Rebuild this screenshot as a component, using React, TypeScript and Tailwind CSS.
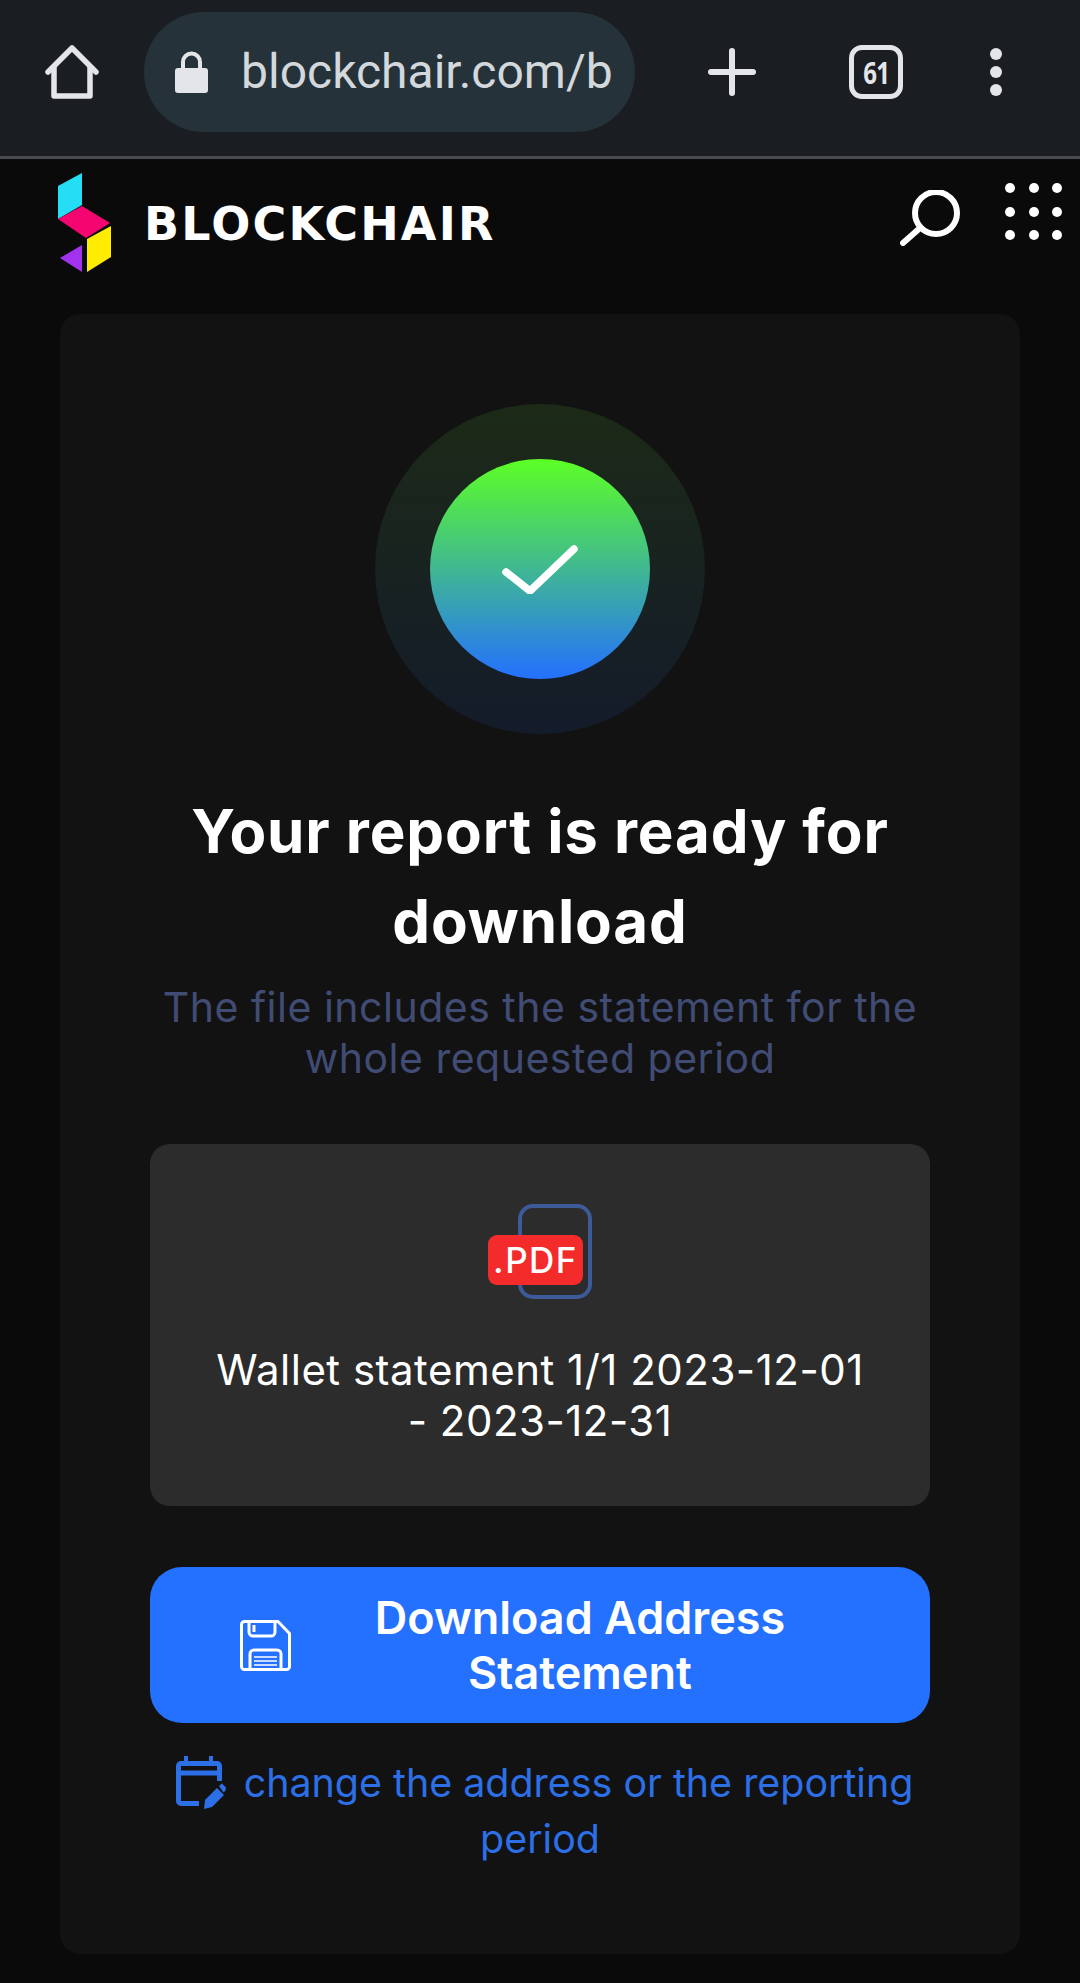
const BrowserBar = () => (
  <div className="flex h-[159px] items-center border-b-[3px] border-[#474a4e] bg-[#1a1d21] pb-[12px] pl-[45px]">
    <svg width="54" height="54" viewBox="0 0 54 54" fill="none" stroke="#e3e5e8" strokeWidth="5.5" strokeLinejoin="round" strokeLinecap="round">
      <path d="M3 27 27 3l24 24" />
      <path d="M9 23v28h36V23" />
    </svg>
    <div className="ml-[45px] flex h-[120px] w-[491px] items-center overflow-hidden rounded-full bg-[#263239] pl-[31px]">
      <svg width="33" height="42" viewBox="0 0 33 42" className="shrink-0">
        <path d="M8 19v-8a8.5 8.5 0 0 1 17 0v8" fill="none" stroke="#e3e5e8" strokeWidth="4" />
        <rect x="0" y="17" width="33" height="25" rx="3" fill="#e3e5e8" />
      </svg>
      <span className="ml-[33px] whitespace-nowrap font-['Roboto',sans-serif] text-[48px] leading-none text-[#d3d8dc]">blockchair.com/b</span>
    </div>
    <svg width="48" height="48" viewBox="0 0 48 48" className="ml-[73px]" stroke="#e3e5e8" strokeWidth="6" strokeLinecap="round">
      <path d="M3 24h42M24 3v42" />
    </svg>
    <div className="ml-[93px] flex h-[54px] w-[54px] items-center justify-center rounded-[13px] border-[5px] border-[#e3e5e8] font-['Open_Sans',sans-serif] text-[30px] font-bold text-[#e3e5e8]">
      <span className="scale-x-[0.8] tracking-[-1px]">61</span>
    </div>
    <div className="ml-[87px] flex flex-col gap-[6px]">
      <div className="h-[12px] w-[12px] rounded-full bg-[#e3e5e8]" />
      <div className="h-[12px] w-[12px] rounded-full bg-[#e3e5e8]" />
      <div className="h-[12px] w-[12px] rounded-full bg-[#e3e5e8]" />
    </div>
  </div>
)

const Logo = () => (
  <svg width="54" height="100" viewBox="58 173 54 100" className="shrink-0">
    <path d="M58 186 82 173v32l-24 14z" fill="#25def5" />
    <path d="M58 219l24-13 28 17-24 15z" fill="#f5056f" />
    <path d="M87 239l24-13v31l-24 15z" fill="#ffec00" />
    <path d="M82 245 60 258l22 14z" fill="#a232ee" />
  </svg>
)

const Header = () => (
  <div className="flex h-[155px] items-start bg-[#0a0a0a] pl-[58px] pr-[18px] pt-[14px]">
    <Logo />
    <span className="ml-[32px] mt-[24px] font-['DejaVu_Sans',sans-serif] text-[46px] font-bold leading-[55px] tracking-[2.2px] text-white">BLOCKCHAIR</span>
    <svg width="60" height="56" viewBox="0 0 60 56" fill="none" stroke="#fff" strokeWidth="6" strokeLinecap="round" className="ml-auto mt-[17px]">
      <circle cx="36" cy="23" r="21" />
      <path d="M20 38 3 53" />
    </svg>
    <div className="ml-[45px] mt-[10px] grid grid-cols-3 gap-x-[13.5px] gap-y-[13.5px]">
      {Array.from({ length: 9 }).map((_, i) => (
        <div key={i} className="h-[10px] w-[10px] rounded-full bg-white" />
      ))}
    </div>
  </div>
)

const CheckBadge = () => (
  <div className="mx-auto flex h-[330px] w-[330px] items-center justify-center rounded-full bg-linear-to-b/srgb from-[#1c2a17] to-[#141b2a]">
    <div className="flex h-[220px] w-[220px] items-center justify-center rounded-full bg-linear-to-b/srgb from-[#5cff25] to-[#2470ff]">
      <svg width="80" height="50" viewBox="0 0 80 50" fill="none" stroke="#fff" strokeWidth="7.5" strokeLinecap="round" strokeLinejoin="round">
        <path d="M6 28l24 19L74 5" />
      </svg>
    </div>
  </div>
)

const PdfIcon = () => (
  <div className="relative mx-auto h-[95px] w-[104px]">
    <div className="ml-[30px] h-[95px] w-[74px] rounded-[15px] border-[4px] border-[#3d5a99]" />
    <div className="absolute left-0 top-[31px] flex h-[50px] w-[95px] items-center justify-center rounded-[9px] bg-[#f32b2b] font-['Inter',sans-serif] text-[35px] font-medium leading-none tracking-[1.5px] text-white">.PDF</div>
  </div>
)

const FloppyIcon = () => (
  <svg width="51" height="51" viewBox="0 0 51 51" fill="none" stroke="#fff" strokeWidth="3" strokeLinejoin="round" className="shrink-0">
    <path d="M4 1.500h34l11.500 12v33a3 3 0 0 1-3 3h-42a3 3 0 0 1-3-3v-42a3 3 0 0 1 3-3z" />
    <path d="M9 2v10a4 4 0 0 0 4 4h18a4 4 0 0 0 4-4V2" />
    <path d="M14 5v7" strokeWidth="3" />
    <path d="M10 49V34a4 4 0 0 1 4-4h23a4 4 0 0 1 4 4v15" />
    <path d="M14 37h23M14 41h23M14 45h23" strokeWidth="1.6" />
  </svg>
)

const CalendarIcon = () => (
  <svg width="50" height="53" viewBox="0 0 50 53" fill="none" className="ml-[9px] mr-[18px] inline-block align-[-12px]">
    <path d="M8 0h4v6H8zM33 0h4v6h-4z" fill="#2c6fe6" />
    <path d="M43.500 25V10a2.500 2.500 0 0 0-2.500-2.500H5A2.500 2.500 0 0 0 2.500 10v35A2.500 2.500 0 0 0 5 47.500h18" stroke="#2c6fe6" strokeWidth="5" />
    <path d="M3 17h40" stroke="#2c6fe6" strokeWidth="5" />
    <path d="M28 53l1-9 12-12 7 7-12 12z" fill="#2c6fe6" />
    <path d="M43 30l3-2.500 4 4-.5 3-2 2z" fill="#2c6fe6" />
  </svg>
)

export default function App() {
  return (
    <div className="min-h-[1983px] bg-[#0a0a0a] font-['Inter',sans-serif]">
      <BrowserBar />
      <Header />
      <main className="mx-[60px] rounded-[20px] bg-[#121212] px-[90px] pb-[87px] pt-[90px] text-center">
        <CheckBadge />
        <h1 className="-mx-[20px] mt-[52px] text-[60px] font-bold leading-[90px] tracking-[0.9px] text-white">
          Your report is ready for download
        </h1>
        <p className="mt-[16px] text-[41px] leading-[51px] tracking-[0.5px] text-[#414c74]">
          The file includes the statement for the whole requested period
        </p>
        <div className="mt-[60px] rounded-[20px] bg-[#2c2c2c] px-[60px] pb-[60px] pt-[60px]">
          <PdfIcon />
          <p className="mt-[45px] text-[42px] leading-[51px] tracking-[0.5px] text-white">
            Wallet statement 1/1 2023-12-01 - 2023-12-31
          </p>
        </div>
        <button className="mt-[61px] flex h-[156px] w-full items-center rounded-[32px] bg-[#2470ff] pl-[90px] pr-[90px]">
          <FloppyIcon />
          <span className="ml-[29px] flex-1 text-[45px] font-semibold leading-[55px] text-white">
            Download Address Statement
          </span>
        </button>
        <p className="mt-[32px] text-[39.4px] leading-[56px] text-[#2c6fe6]">
          <CalendarIcon />
          change the address or the reporting period
        </p>
      </main>
    </div>
  )
}
